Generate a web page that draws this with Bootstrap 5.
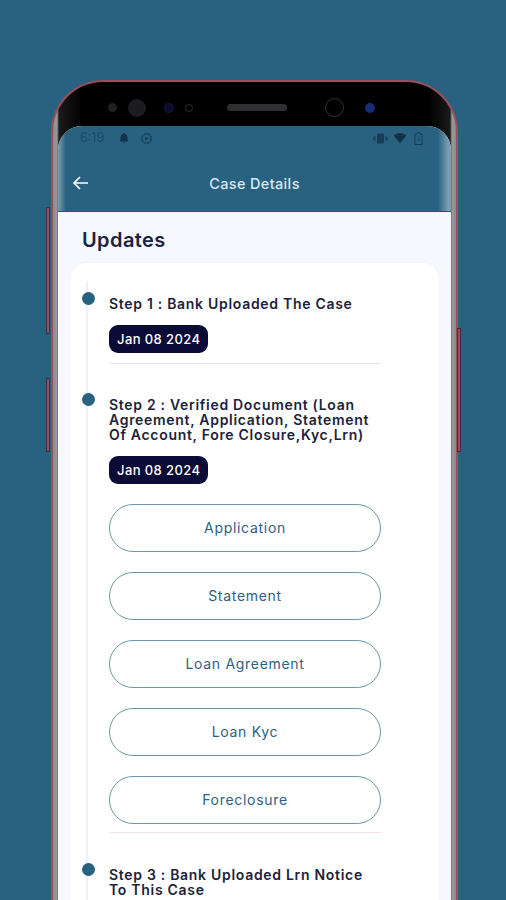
<!DOCTYPE html>
<html lang="en">
<head>
<meta charset="utf-8">
<title>Case Details</title>
<link href="https://cdn.jsdelivr.net/npm/bootstrap@5.3.0/dist/css/bootstrap.min.css" rel="stylesheet">
<style>
html,body{height:900px;overflow:hidden}
body{background:#286280;font-family:Inter,"Noto Sans","Liberation Sans",sans-serif}
.shell{position:relative;width:407px;height:820px;margin:80px 0 0 51px;border:2px solid #9a4f5c;border-bottom:0;border-radius:52px 52px 0 0;background:linear-gradient(90deg,#8a8a8a 0,#9a9a9a 4px,#1a1a1a 6px,#000 30px,#000 376px,#1a1a1a 397px,#9a9a9a 399px,#8a8a8a 403px)}
.side-key{position:absolute;background:#8a5560;border:1px solid #4a2a35}
.key-a{left:-7px;top:125px;width:4px;height:127px}
.key-b{left:-7px;top:296px;width:4px;height:74px}
.key-c{right:-5px;top:246px;width:4px;height:124px}
.sensors{height:44px;padding:7px 0 0 55px}
.dot-s{border-radius:50%;flex:none}
.s1{width:9px;height:9px;background:#202022}
.s2{width:18px;height:18px;background:#1c1c20;margin-left:11px}
.s3{width:10px;height:10px;background:#0b0b2c;border:1px solid #17174a;margin-left:18px}
.s4{width:8px;height:8px;border:1px solid #2b2b30;margin-left:11px}
.grille{width:60px;height:7px;border-radius:4px;background:#2f2f31;margin-left:34px}
.s5{width:19px;height:19px;border:1px solid #333;margin-left:38px}
.s6{width:10px;height:10px;background:#1a2c78;margin-left:21px}
.screen{margin:0 5px;height:774px;border-radius:24px 24px 0 0;overflow:hidden;background:#f6f8fd}
.head-bar{height:86px;background:linear-gradient(90deg,#7b9db1 0,#286280 8px,#286280 380px,#7b9db1 390px);border-bottom:1px solid #1f5a77}
.status-row{height:24px;padding:0 28px 0 22px;color:#1a4a68;font-size:12.5px}
.gap-bell{margin-left:14px}
.gap-gear{margin-left:10px}
.gap-wifi{margin-left:5px}
.gap-batt{margin-left:7px}
.title-row{height:60px;color:#dbe7f1;font-size:14.5px;font-weight:500;padding-top:8px;letter-spacing:.35px}
.back-icon{position:absolute;left:14px;top:26px}
.body-pad{padding:14px 12px 0 12px}
.page-title{font-size:20px;font-weight:600;color:#1a2440;line-height:28px;margin:0 0 9px 12px;letter-spacing:.4px}
.tl-card{background:#fff;border-radius:16px 16px 0 0;height:640px;padding:19px 58px 0 39px;position:relative;box-shadow:0 0 3px rgba(30,50,110,.05)}
.tl-rail{position:absolute;left:16px;top:18px;bottom:0;width:2px;background:#eef1fb}
.tl-dot{position:absolute;left:-27px;top:10px;width:13px;height:13px;border-radius:50%;background:#286280}
.tl-item{position:relative}
.tl-gap-a{margin-top:19px}
.tl-gap-b{margin-top:20px}
.tl-name{font-size:14px;line-height:15px;font-weight:600;color:#1d2338;padding-top:14px;margin:0;letter-spacing:.7px}
.date-pill{display:inline-block;background:#0a0b36;color:#fff;font-size:13px;font-weight:500;line-height:28px;height:28px;padding:0 8px;border-radius:9px;margin-top:14px;letter-spacing:.4px}
.tl-line{height:1px;background:#e5e7ea;margin-top:10px}
.tl-line.pink{background:#f3e2e6;margin-top:8px}
.doc-btn{display:block;width:100%;height:48px;line-height:46px;padding:0;border:1px solid #6f96a9;border-radius:24px;background:#fff;color:#2c6280;font-size:14px;text-align:center;letter-spacing:.7px}
.doc-list{display:flex;flex-direction:column;gap:20px;margin-top:20px}
</style>
</head>
<body>
<div class="shell">
  <span class="side-key key-a"></span><span class="side-key key-b"></span><span class="side-key key-c"></span>
  <div class="sensors d-flex align-items-center">
    <span class="dot-s s1"></span><span class="dot-s s2"></span><span class="dot-s s3"></span><span class="dot-s s4"></span>
    <span class="grille"></span><span class="dot-s s5"></span><span class="dot-s s6"></span>
  </div>
  <div class="screen">
    <div class="head-bar position-relative">
      <div class="status-row d-flex align-items-center">
        <span>6:19</span>
        <svg class="gap-bell" width="12" height="12" viewBox="0 0 12 12"><path d="M6 1a1 1 0 0 1 1 1c2 .5 2.500 2 2.500 3.500V8l1 1.500h-9L2.500 8V5.500C2.500 4 3 2.500 5 2a1 1 0 0 1 1-1zM5 10.300h2a1 1 0 0 1-2 0z" fill="#12324a"/></svg>
        <svg class="gap-gear" width="13" height="13" viewBox="0 0 13 13"><circle cx="6.500" cy="6.500" r="4.800" fill="none" stroke="#173d58" stroke-width="1.300" stroke-dasharray="3 .8"/><circle cx="6.500" cy="6.500" r="1.500" fill="#173d58"/></svg>
        <svg class="ms-auto" width="15" height="13" viewBox="0 0 15 13"><rect x="4" y="1.500" width="7" height="10" rx="1" fill="#173d58"/><path d="M2 4v5M0.700 5v3M13 4v5M14.300 5v3" stroke="#173d58"/></svg>
        <svg class="gap-wifi" width="14" height="12" viewBox="0 0 14 12"><path d="M0.500 3.500C4 0 10 0 13.500 3.500L7 11z" fill="#12324a"/></svg>
        <svg class="gap-batt" width="9" height="13" viewBox="0 0 9 13"><path d="M3 1h3v1h2v10.500H1V2h2z" fill="none" stroke="#173d58"/><path d="M5 4 3.500 7.500H5.500L4 10" fill="none" stroke="#173d58" stroke-width=".7"/></svg>
      </div>
      <div class="title-row d-flex align-items-center justify-content-center position-relative">
        <svg class="back-icon" width="16" height="14" viewBox="0 0 16 14"><path d="M8 1 2 7l6 6M2 7h14" fill="none" stroke="#fff" stroke-width="1.700"/></svg>
        <span>Case Details</span>
      </div>
    </div>
    <div class="body-pad">
      <h1 class="page-title">Updates</h1>
      <div class="tl-card">
        <span class="tl-rail"></span>
        <div class="tl-item">
          <span class="tl-dot"></span>
          <p class="tl-name">Step 1 : Bank Uploaded The Case</p>
          <span class="date-pill">Jan 08 2024</span>
          <div class="tl-line"></div>
        </div>
        <div class="tl-item tl-gap-a">
          <span class="tl-dot"></span>
          <p class="tl-name">Step 2 : Verified Document (Loan Agreement, Application, Statement Of Account, Fore Closure,Kyc,Lrn)</p>
          <span class="date-pill">Jan 08 2024</span>
          <div class="doc-list">
            <button class="doc-btn" type="button">Application</button>
            <button class="doc-btn" type="button">Statement</button>
            <button class="doc-btn" type="button">Loan Agreement</button>
            <button class="doc-btn" type="button">Loan Kyc</button>
            <button class="doc-btn" type="button">Foreclosure</button>
          </div>
          <div class="tl-line pink"></div>
        </div>
        <div class="tl-item tl-gap-b">
          <span class="tl-dot"></span>
          <p class="tl-name">Step 3 : Bank Uploaded Lrn Notice To This Case</p>
        </div>
      </div>
    </div>
  </div>
</div>
</body>
</html>
